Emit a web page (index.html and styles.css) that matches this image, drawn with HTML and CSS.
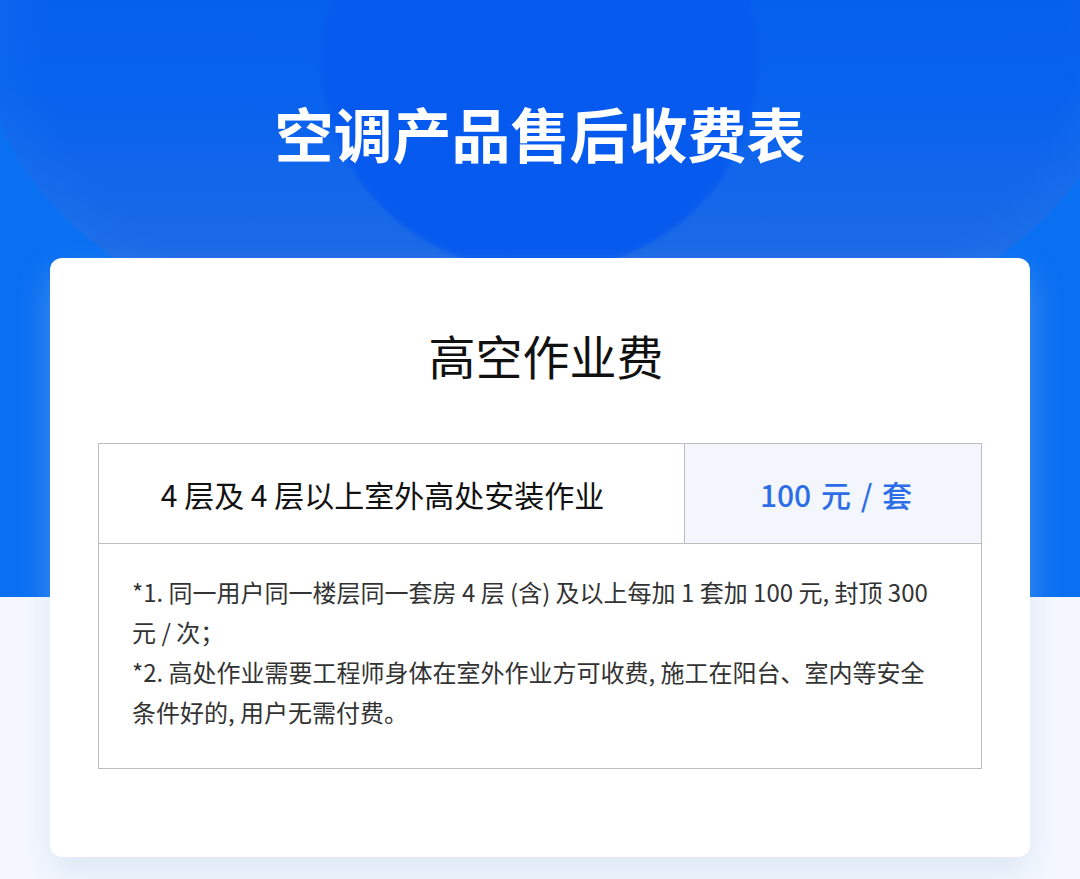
FILE: index.html
```html
<!DOCTYPE html>
<html lang="zh-CN">
<head>
    <meta charset="UTF-8">
    <title>空调产品售后收费表</title>
    <link rel="stylesheet" href="styles.css">
</head>
<body>
    <div class="page">
        <h1 class="page-title">空调产品售后收费表</h1>

        <!-- Fee card -->
        <div class="card">
            <h2 class="card-title">高空作业费</h2>

            <div class="fee-table">
                <div class="fee-item">4 层及 4 层以上室外高处安装作业</div>
                <div class="fee-price">100 元 / 套</div>
                <div class="fee-notes">
                    <p>*1. 同一用户同一楼层同一套房 4 层 (含) 及以上每加 1 套加 100 元, 封顶 300 元 / 次；</p>
                    <p>*2. 高处作业需要工程师身体在室外作业方可收费, 施工在阳台、室内等安全条件好的, 用户无需付费。</p>
                </div>
            </div>
        </div>
    </div>
</body>
</html>
```

FILE: styles.css
```css
body {
    margin: 0;
    background: #f4f8fe;
    font-family: "Noto Sans CJK SC", "Noto Sans", sans-serif;
}
.page {
    min-height: 879px;
    padding: 98px 0 24px;
    box-sizing: border-box;
    background:
        radial-gradient(ellipse 222px 215px at 540px 60px, #0659ee 0%, #075aee 97%, rgba(7, 90, 238, 0) 100%),
        radial-gradient(ellipse 570px 330px at 555px 50px, rgba(40, 130, 240, 0) 90%, rgba(40, 130, 240, 0.18) 99.6%, #0a70f2 100%),
        linear-gradient(180deg, #0660ee 0%, #0762ee 90px, #1d6ae6 260px, #2470e6 380px, #0a70f2 381px, #0a6cf2 100%);
    background-size: 100% 597px;
    background-repeat: no-repeat;
}
.page-title {
    margin: 0;
    text-align: center;
    color: #fff;
    font-size: 59px;
    font-weight: 700;
    line-height: 70px;
}
.card {
    margin: 90px 50px 0;
    padding: 65px 48px 88px;
    background: #fff;
    border-radius: 12px;
    box-shadow: 0 16px 30px rgba(180, 200, 230, 0.35);
}
.card-title {
    margin: 0 0 56px;
    padding-left: 12px;
    text-align: center;
    color: #111;
    font-size: 47px;
    font-weight: 400;
    line-height: 64px;
}
.fee-table {
    display: grid;
    grid-template-columns: 586px 1fr;
    border: 1px solid #bdbdbd;
}
.fee-item,
.fee-price {
    height: 99px;
    display: flex;
    align-items: center;
    justify-content: center;
    border-bottom: 1px solid #bdbdbd;
    font-size: 30px;
}
.fee-item {
    padding-right: 18px;
    border-right: 1px solid #bdbdbd;
    color: #111;
}
.fee-price {
    background: #f3f7fd;
    color: #2d6ee8;
    font-weight: 500;
    word-spacing: 3px;
    padding-left: 6px;
}
.fee-notes {
    grid-column: 1 / 3;
    padding: 28px 45px 36px 33px;
    color: #333;
    font-size: 24px;
    line-height: 40px;
}
.fee-notes p {
    margin: 0;
}
```
